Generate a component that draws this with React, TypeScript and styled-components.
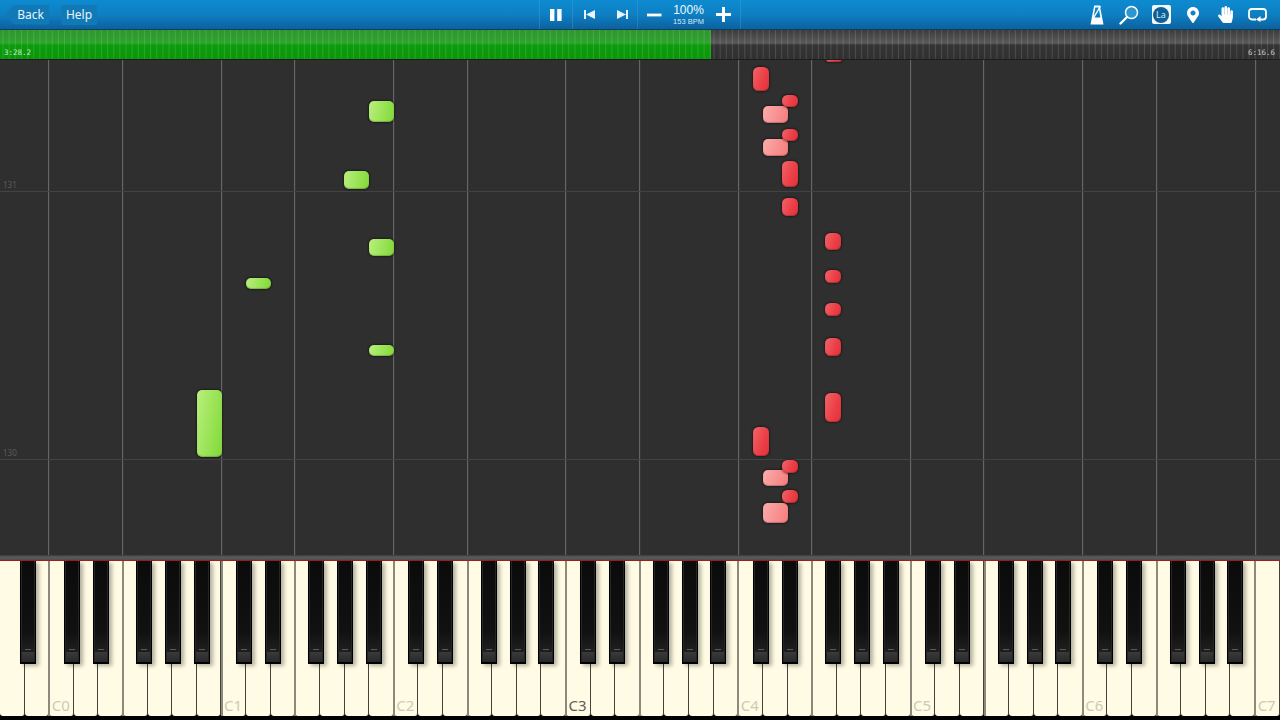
import styled, { createGlobalStyle } from "styled-components";
import { FaHandPaper, FaMapMarkerAlt } from "react-icons/fa";

const GlobalStyle = createGlobalStyle`
    html, body {
        margin: 0;
        padding: 0;
        background: #2f2f2f;
        overflow: hidden;
    }
`;

const Page = styled.div`
    display: flex;
    flex-direction: column;
    width: 1280px;
    height: 720px;
    overflow: hidden;
    font-family: "Noto Sans", "Liberation Sans", sans-serif;
`;

const Toolbar = styled.div`
    display: grid;
    flex: 0 0 29px;
    grid-template-columns: 539px 202px 1fr;
    height: 29px;
    background: linear-gradient(#0d8bd0, #0e7fc2 50%, #0c619f);
`;

const LeftGroup = styled.div`
    display: flex;
    align-items: center;
    gap: 12px;
    padding-left: 5px;
`;

const BackButton = styled.div`
    display: flex;
    align-items: center;
    justify-content: flex-end;
    width: 44px;
    height: 20px;
    padding-right: 5px;
    box-sizing: border-box;
    color: #e8f4fb;
    font-size: 12px;
    background: #1179b6;
    clip-path: polygon(9px 0, 100% 0, 100% 100%, 9px 100%, 0 50%);
`;

const HelpButton = styled.div`
    display: flex;
    align-items: center;
    justify-content: center;
    width: 36px;
    height: 20px;
    color: #e8f4fb;
    font-size: 12px;
    background: #1179b6;
    border-radius: 2px;
`;

const CenterGroup = styled.div`
    display: flex;
    align-items: stretch;
    border-left: 1px solid rgba(70, 170, 220, 0.35);
    border-right: 1px solid rgba(70, 170, 220, 0.35);
`;

const Cell = styled.div<{ $w: number; $line?: boolean }>`
    display: flex;
    align-items: center;
    justify-content: center;
    width: ${(p) => p.$w}px;
    border-right: ${(p) => (p.$line ? "1px solid rgba(70, 170, 220, 0.35)" : "none")};
    box-sizing: border-box;
`;

const Zoom = styled(Cell)`
    flex-direction: column;
    color: #f2f9fd;
    font-family: "Liberation Sans", sans-serif;
`;

const ZoomValue = styled.div`
    font-size: 12px;
    line-height: 14px;
`;

const ZoomBpm = styled.div`
    font-size: 7.5px;
    line-height: 9px;
    color: #d3e9f5;
    white-space: nowrap;
`;

const RightGroup = styled.div`
    display: flex;
    align-items: center;
    justify-content: flex-end;
    padding-right: 7px;
`;

const IconButton = styled.div`
    display: flex;
    align-items: center;
    justify-content: center;
    width: 32px;
    height: 29px;
    color: #fff;
`;

const Progress = styled.div`
    display: flex;
    flex: 0 0 31px;
    height: 31px;
    box-sizing: border-box;
    border-top: 1px solid #0d3f5f;
    border-bottom: 1px solid #1d1d1d;
`;

const stripes = `repeating-linear-gradient(90deg, rgba(255,255,255,0) 0 2px, rgba(255,255,255,0.13) 3px, rgba(255,255,255,0) 4px 6.15px)`;

const Played = styled.div`
    display: flex;
    align-items: flex-end;
    width: 711px;
    background: ${stripes}, linear-gradient(#2e962e, #2fa42f 45%, #0c9c0c 52%, #0a960a);
`;

const Remaining = styled.div`
    display: flex;
    flex: 1;
    align-items: flex-end;
    justify-content: flex-end;
    background: ${stripes}, linear-gradient(#3c3c3c, #5a5a5a 45%, #343434 52%, #303030);
`;

const Time = styled.span<{ $side: "left" | "right" }>`
    padding: ${(p) => (p.$side === "left" ? "0 0 1px 4px" : "0 5px 1px 0")};
    color: ${(p) => (p.$side === "left" ? "#c4e8c4" : "#c8c8c8")};
    font-family: "DejaVu Sans Mono", monospace;
    font-size: 7.500px;
    line-height: 10px;
`;

const Roll = styled.div`
    position: relative;
    flex: 1;
    overflow: hidden;
    background: #2f2f2f;
`;

const VLine = styled.div<{ $x: number }>`
    position: absolute;
    top: 0;
    bottom: 0;
    left: ${(p) => p.$x}px;
    width: 1px;
    background: #666;
    box-shadow: 1px 0 0 rgba(255, 255, 255, 0.04);
`;

const HLine = styled.div<{ $y: number }>`
    position: absolute;
    left: 0;
    right: 0;
    top: ${(p) => p.$y}px;
    height: 1px;
    background: #434343;
`;

const BarLabel = styled.span<{ $y: number }>`
    position: absolute;
    left: 3px;
    top: ${(p) => p.$y}px;
    color: #5c5c5c;
    font-size: 8px;
    line-height: 10px;
`;

const noteColors = {
    green: "linear-gradient(100deg, #b9ef7e, #8fdf48 75%, #84d63c)",
    red: "linear-gradient(110deg, #f0646a, #ec3e46 60%, #e0323a)",
    pink: "linear-gradient(110deg, #fcacac, #f78a8a 70%, #f27e7e)",
};

const Note = styled.div<{ $x: number; $y: number; $w: number; $h: number; $kind: keyof typeof noteColors }>`
    position: absolute;
    left: ${(p) => p.$x}px;
    top: ${(p) => p.$y}px;
    width: ${(p) => p.$w}px;
    height: ${(p) => p.$h}px;
    background: ${(p) => noteColors[p.$kind]};
    border-radius: ${(p) => Math.min(p.$kind === "red" ? 5.5 : 5, p.$h / 2)}px;
    box-shadow: 0 0 2px 1px rgba(0, 0, 0, 0.4), inset 0 -1px 1px rgba(0, 0, 0, 0.22);
`;

const KeyBed = styled.div`
    flex: 0 0 165px;
    display: flex;
    flex-direction: column;
    height: 165px;
    background: #000;
`;

const KeyTop = styled.div`
    flex: 0 0 5px;
    background: linear-gradient(#3a3a3a, #5a5a5a 40%, #505050);
    border-bottom: 1px solid #a01c22;
`;

const WhiteKeys = styled.div`
    position: relative;
    display: flex;
    height: 155px;
`;

const WhiteKey = styled.div`
    display: flex;
    flex: 1;
    align-items: flex-end;
    justify-content: flex-end;
    padding: 0 3px 2px 0;
    box-sizing: border-box;
    background: #fffbe4;
    border-radius: 0 0 3px 3px;
    border-right: 1px solid #45443a;
    &:last-of-type {
        border-right: none;
    }
`;

const KeyLabel = styled.span<{ $dark: boolean }>`
    color: ${(p) => (p.$dark ? "#5e5d55" : "#cdcab6")};
    font-size: 15px;
    line-height: 18px;
`;

const OctaveLine = styled.div<{ $x: number }>`
    position: absolute;
    top: 0;
    bottom: 0;
    left: ${(p) => p.$x}px;
    width: 2px;
    background: #8c8a7c;
`;

const BlackKey = styled.div<{ $x: number }>`
    position: absolute;
    top: 0;
    left: ${(p) => p.$x}px;
    width: 16px;
    height: 103px;
    box-sizing: border-box;
    background: linear-gradient(#0b0b0b, #111 70%, #1e1e1e 88%);
    border-left: 1px solid #000;
    border-right: 1px solid #000;
    border-bottom: 2px solid #000;
    box-shadow: 3px 2px 4px rgba(0, 0, 0, 0.3), inset 1px 0 0 #262626, inset -1px 0 0 #262626;
    &::before {
        content: "";
        position: absolute;
        left: 1px;
        right: 1px;
        bottom: 0;
        height: 10px;
        background: linear-gradient(#3a3a3a, #282828);
    }
    &::after {
        content: "";
        position: absolute;
        left: 4px;
        right: 4px;
        bottom: 12px;
        height: 1px;
        background: #5a5a5a;
    }
`;

const gridLines = [48, 122, 221, 294, 393, 467, 565, 639, 738, 811, 910, 983, 1082, 1156, 1255];

const notes: { x: number; y: number; w: number; h: number; kind: keyof typeof noteColors }[] = [
    { x: 369, y: 41, w: 25, h: 21, kind: "green" },
    { x: 344, y: 111, w: 25, h: 18, kind: "green" },
    { x: 369, y: 179, w: 25, h: 17, kind: "green" },
    { x: 246, y: 218, w: 25, h: 11, kind: "green" },
    { x: 369, y: 285, w: 25, h: 11, kind: "green" },
    { x: 197, y: 330, w: 25, h: 67, kind: "green" },
    { x: 763, y: 46, w: 25, h: 17, kind: "pink" },
    { x: 763, y: 79, w: 25, h: 17, kind: "pink" },
    { x: 763, y: 410, w: 25, h: 16, kind: "pink" },
    { x: 763, y: 443, w: 25, h: 20, kind: "pink" },
    { x: 826, y: -4, w: 16, h: 6, kind: "red" },
    { x: 753, y: 7, w: 16, h: 24, kind: "red" },
    { x: 782, y: 35, w: 16, h: 12, kind: "red" },
    { x: 782, y: 69, w: 16, h: 12, kind: "red" },
    { x: 782, y: 101, w: 16, h: 26, kind: "red" },
    { x: 782, y: 138, w: 16, h: 18, kind: "red" },
    { x: 825, y: 173, w: 16, h: 17, kind: "red" },
    { x: 825, y: 210, w: 16, h: 13, kind: "red" },
    { x: 825, y: 243, w: 16, h: 13, kind: "red" },
    { x: 825, y: 278, w: 16, h: 18, kind: "red" },
    { x: 825, y: 333, w: 16, h: 29, kind: "red" },
    { x: 753, y: 367, w: 16, h: 29, kind: "red" },
    { x: 782, y: 400, w: 16, h: 13, kind: "red" },
    { x: 782, y: 430, w: 16, h: 13, kind: "red" },
];

const WHITE_COUNT = 52;
const WHITE_W = 1280 / WHITE_COUNT;
const OCTAVE = WHITE_W * 7;
const whiteKeys = Array.from({ length: WHITE_COUNT }, (_, i) => i);

// offsets of the black keys inside one octave, counted from each C
const blackOffsets = [14.3, 43.3, 86.8, 115.8, 144.3];
const blackKeys: number[] = [20];
for (let o = 0; o < 8; o++) {
    blackOffsets.forEach((b) => {
        const x = WHITE_W * 2 + OCTAVE * o + b;
        if (x < 1250) blackKeys.push(x);
    });
}

const octaveLines: number[] = [];
for (let o = 0; o < 8; o++) {
    octaveLines.push(WHITE_W * 2 + OCTAVE * o - 1);
    octaveLines.push(WHITE_W * 5 + OCTAVE * o - 1);
}

const labelFor = (i: number) => ((i - 2) % 7 === 0 ? `C${(i - 2) / 7}` : "");

const PauseIcon = () => (
    <svg width="12" height="14" viewBox="0 0 12 14"><path d="M0 1h4.400v12H0zM7.200 1h4.400v12H7.200z" fill="#fff" /></svg>
);
const PrevIcon = () => (
    <svg width="12" height="11" viewBox="0 0 12 11"><path d="M0 1h2v9H0zM2 5.500 11 1v9z" fill="#e8f4fb" /></svg>
);
const NextIcon = () => (
    <svg width="12" height="11" viewBox="0 0 12 11"><path d="M10 1h2v9h-2zM10 5.500 1 1v9z" fill="#e8f4fb" /></svg>
);
const MinusIcon = () => (
    <svg width="15" height="14" viewBox="0 0 15 14"><path d="M0 5.600h14.500v2.800H0z" fill="#fff" /></svg>
);
const PlusIcon = () => (
    <svg width="15" height="15" viewBox="0 0 15 15"><path d="M6 0h3v6h6v3H9v6H6V9H0V6h6z" fill="#fff" /></svg>
);
const MetronomeIcon = () => (
    <svg width="14" height="20" viewBox="0 0 14 20">
        <path d="M4.200 .5h5.600L13.500 19.500H.5zM5.300 2.500 3.600 12.500h6.800L8.700 2.500z" fill="#fff" fillRule="evenodd" />
        <path d="M3.500 13 10.500 1" stroke="#fff" strokeWidth="1.400" />
    </svg>
);
const SearchIcon = () => (
    <svg width="20" height="20" viewBox="0 0 20 20">
        <circle cx="12.500" cy="7.500" r="6" fill="#2f97d0" stroke="#fff" strokeWidth="1.500" />
        <path d="M8 12 1.500 18.500" stroke="#fff" strokeWidth="2.400" strokeLinecap="round" />
    </svg>
);
const LoopIcon = () => (
    <svg width="19" height="14" viewBox="0 0 19 14">
        <path d="M8 11.500H4a3 3 0 0 1-3-3V4a3 3 0 0 1 3-3h11a3 3 0 0 1 3 3v4.500a3 3 0 0 1-3 3h-3" fill="none" stroke="#fff" strokeWidth="1.800" />
        <path d="M12.500 8 8 11.500l4.500 2.500z" fill="#fff" />
    </svg>
);

const LaBadge = styled.div`
    display: flex;
    align-items: center;
    justify-content: center;
    width: 19px;
    height: 19px;
    background: #f2f9fd;
    border-radius: 2px;
`;

const LaCircle = styled.div`
    display: flex;
    align-items: center;
    justify-content: center;
    width: 16px;
    height: 16px;
    color: #d5ebf7;
    background: #0f5f98;
    border-radius: 50%;
    font-size: 9px;
`;

export default function App() {
    return (
        <Page>
            <GlobalStyle />
            <Toolbar>
                <LeftGroup>
                    <BackButton>Back</BackButton>
                    <HelpButton>Help</HelpButton>
                </LeftGroup>
                <CenterGroup>
                    <Cell $w={33} $line><PauseIcon /></Cell>
                    <Cell $w={33}><PrevIcon /></Cell>
                    <Cell $w={32} $line><NextIcon /></Cell>
                    <Cell $w={33}><MinusIcon /></Cell>
                    <Zoom $w={35}>
                        <ZoomValue>100%</ZoomValue>
                        <ZoomBpm>153 BPM</ZoomBpm>
                    </Zoom>
                    <Cell $w={34}><PlusIcon /></Cell>
                </CenterGroup>
                <RightGroup>
                    <IconButton><MetronomeIcon /></IconButton>
                    <IconButton><SearchIcon /></IconButton>
                    <IconButton><LaBadge><LaCircle>La</LaCircle></LaBadge></IconButton>
                    <IconButton><FaMapMarkerAlt size={16} /></IconButton>
                    <IconButton><FaHandPaper size={17} /></IconButton>
                    <IconButton><LoopIcon /></IconButton>
                </RightGroup>
            </Toolbar>
            <Progress>
                <Played><Time $side="left">3:28.2</Time></Played>
                <Remaining><Time $side="right">6:16.6</Time></Remaining>
            </Progress>
            <Roll>
                {gridLines.map((x) => <VLine key={x} $x={x} />)}
                <HLine $y={131} />
                <HLine $y={399} />
                <BarLabel $y={120}>131</BarLabel>
                <BarLabel $y={388}>130</BarLabel>
                {notes.map((n) => (
                    <Note key={`${n.x}-${n.y}`} $x={n.x} $y={n.y} $w={n.w} $h={n.h} $kind={n.kind} />
                ))}
            </Roll>
            <KeyBed>
                <KeyTop />
                <WhiteKeys>
                    {whiteKeys.map((i) => {
                        const label = labelFor(i);
                        return (
                            <WhiteKey key={i}>
                                {label && <KeyLabel $dark={label === "C3"}>{label}</KeyLabel>}
                            </WhiteKey>
                        );
                    })}
                    {octaveLines.map((x) => <OctaveLine key={x} $x={x} />)}
                    {blackKeys.map((x) => <BlackKey key={x} $x={x} />)}
                </WhiteKeys>
            </KeyBed>
        </Page>
    );
}
